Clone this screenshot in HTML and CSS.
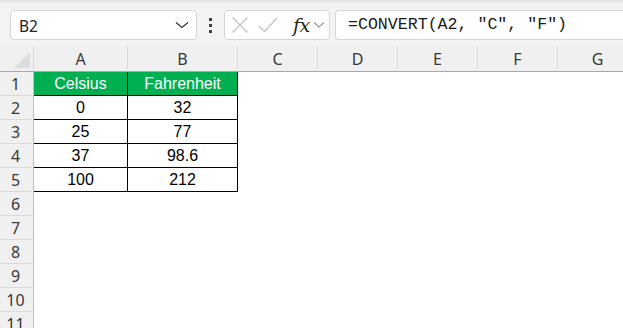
FILE: index.html
```html
<!DOCTYPE html>
<html>
<head>
<meta charset="utf-8">
<link rel="stylesheet" href="styles.css">
</head>
<body>
<div class="toolbar">
  <div class="namebox">
    <span class="nb-text">B2</span>
    <svg class="nb-chev" width="14" height="8" viewBox="0 0 14 8"><path d="M1 1.5 L7 6.5 L13 1.5" fill="none" stroke="#333" stroke-width="1.3"/></svg>
  </div>
  <div class="dots"><i></i><i></i><i></i></div>
  <div class="fxbox">
    <svg class="ic" width="18" height="18" viewBox="0 0 18 18"><path d="M1.5 1.5 L16.5 16.5 M16.5 1.5 L1.5 16.5" stroke="#c4c4c4" stroke-width="1.3" fill="none"/></svg>
    <svg class="ic" width="20" height="18" viewBox="0 0 20 18"><path d="M1 10 L6.5 15.5 L19 2" stroke="#c4c4c4" stroke-width="1.3" fill="none"/></svg>
    <span class="fx">fx</span>
    <svg class="fx-chev" width="12" height="8" viewBox="0 0 12 8"><path d="M1 1.5 L6 6 L11 1.5" fill="none" stroke="#9a9a9a" stroke-width="1.2"/></svg>
  </div>
  <div class="formula">=CONVERT(A2, "C", "F")</div>
</div>
<div class="sheet">
  <div class="corner"><span class="tri"></span></div>
  <div class="ch">A</div><div class="ch">B</div><div class="ch">C</div><div class="ch">D</div><div class="ch">E</div><div class="ch">F</div><div class="ch">G</div>

  <div class="rh">1</div><div class="c hd">Celsius</div><div class="c hd">Fahrenheit</div><div class="e"></div><div class="e"></div><div class="e"></div><div class="e"></div><div class="e"></div>
  <div class="rh">2</div><div class="c">0</div><div class="c">32</div><div class="e"></div><div class="e"></div><div class="e"></div><div class="e"></div><div class="e"></div>
  <div class="rh">3</div><div class="c">25</div><div class="c">77</div><div class="e"></div><div class="e"></div><div class="e"></div><div class="e"></div><div class="e"></div>
  <div class="rh">4</div><div class="c">37</div><div class="c">98.6</div><div class="e"></div><div class="e"></div><div class="e"></div><div class="e"></div><div class="e"></div>
  <div class="rh">5</div><div class="c">100</div><div class="c">212</div><div class="e"></div><div class="e"></div><div class="e"></div><div class="e"></div><div class="e"></div>
  <div class="rh">6</div><div class="e span"></div>
  <div class="rh">7</div><div class="e span"></div>
  <div class="rh">8</div><div class="e span"></div>
  <div class="rh">9</div><div class="e span"></div>
  <div class="rh">10</div><div class="e span"></div>
  <div class="rh">11</div><div class="e span"></div>
</div>
</body>
</html>
```

FILE: styles.css
```css
* { box-sizing: border-box; }
html, body { margin: 0; padding: 0; background: #fff; overflow: hidden; }
body { width: 623px; height: 328px; }

.toolbar {
  height: 46px;
  background: linear-gradient(#dedede 0, #ececec 2px, #f3f3f3 4px, #f3f3f3 100%);
  display: flex;
  align-items: flex-start;
  padding-top: 10px;
  padding-left: 10px;
}
.namebox {
  width: 187px;
  height: 30px;
  background: #fff;
  border: 1px solid #d6d6d6;
  border-radius: 4px;
  display: flex;
  align-items: center;
  padding-left: 8px;
  padding-right: 6px;
}
.nb-text {
  font-family: "Noto Sans", "Open Sans", sans-serif;
  font-size: 15.5px;
  color: #222;
  flex: 1;
  padding-top: 1px;
}
.nb-chev { margin-right: 1px; }
.dots {
  width: 27px;
  height: 30px;
  display: flex;
  flex-direction: column;
  align-items: center;
  justify-content: center;
  gap: 3px;
}
.dots i { display: block; width: 3px; height: 3px; background: #444; }
.fxbox {
  width: 106px;
  height: 30px;
  background: #fff;
  border: 1px solid #d6d6d6;
  border-radius: 4px;
  display: flex;
  align-items: center;
  padding-left: 6px;
  gap: 9px;
}
.fx {
  font-family: "DejaVu Serif", "Liberation Serif", serif;
  font-style: italic;
  font-size: 19px;
  color: #222;
  margin-left: 6px;
  letter-spacing: -0.5px;
}
.fx-chev { margin-left: -6px; }
.formula {
  flex: 1;
  height: 30px;
  margin-left: 5px;
  background: #fff;
  border: 1px solid #d6d6d6;
  border-right: none;
  border-radius: 4px 0 0 4px;
  font-family: "Liberation Mono", "DejaVu Sans Mono", monospace;
  font-size: 16.6px;
  color: #1a1a1a;
  padding-left: 12px;
  line-height: 28px;
  white-space: nowrap;
}

.sheet {
  display: grid;
  grid-template-columns: 34px 94px 110px 80px 80px 80px 80px 80px;
  grid-template-rows: 26px repeat(11, 24px);
}
.corner, .ch {
  background: #f0f0f0;
  border-bottom: 1px solid #a8a8a8;
}
.corner { border-right: 1px solid #d8d8d8; position: relative; }
.tri {
  position: absolute;
  right: 3px;
  bottom: 3px;
  width: 0; height: 0;
  border-left: 16px solid transparent;
  border-bottom: 16px solid #dcdcdc;
}
.ch {
  border-right: 1px solid #dadada;
  font-family: "Noto Sans", "Open Sans", sans-serif;
  font-size: 16px;
  color: #383838;
  display: flex;
  align-items: center;
  justify-content: center;
  padding-top: 1px;
}
.rh {
  background: #f0f0f0;
  border-right: 1px solid #c0c0c0;
  border-bottom: 1px solid #dadada;
  font-family: "Noto Sans", "Open Sans", sans-serif;
  font-size: 16px;
  color: #383838;
  display: flex;
  align-items: center;
  justify-content: center;
  padding-right: 2px;
}
.c {
  border-right: 1px solid #000;
  border-bottom: 1px solid #000;
  font-family: "Liberation Sans", Arial, sans-serif;
  font-size: 16px;
  color: #000;
  display: flex;
  align-items: center;
  justify-content: center;
}
.c.hd { background: #00b050; color: #fff; }
.e { background: #fff; }
.span { grid-column: 2 / span 7; }
```
